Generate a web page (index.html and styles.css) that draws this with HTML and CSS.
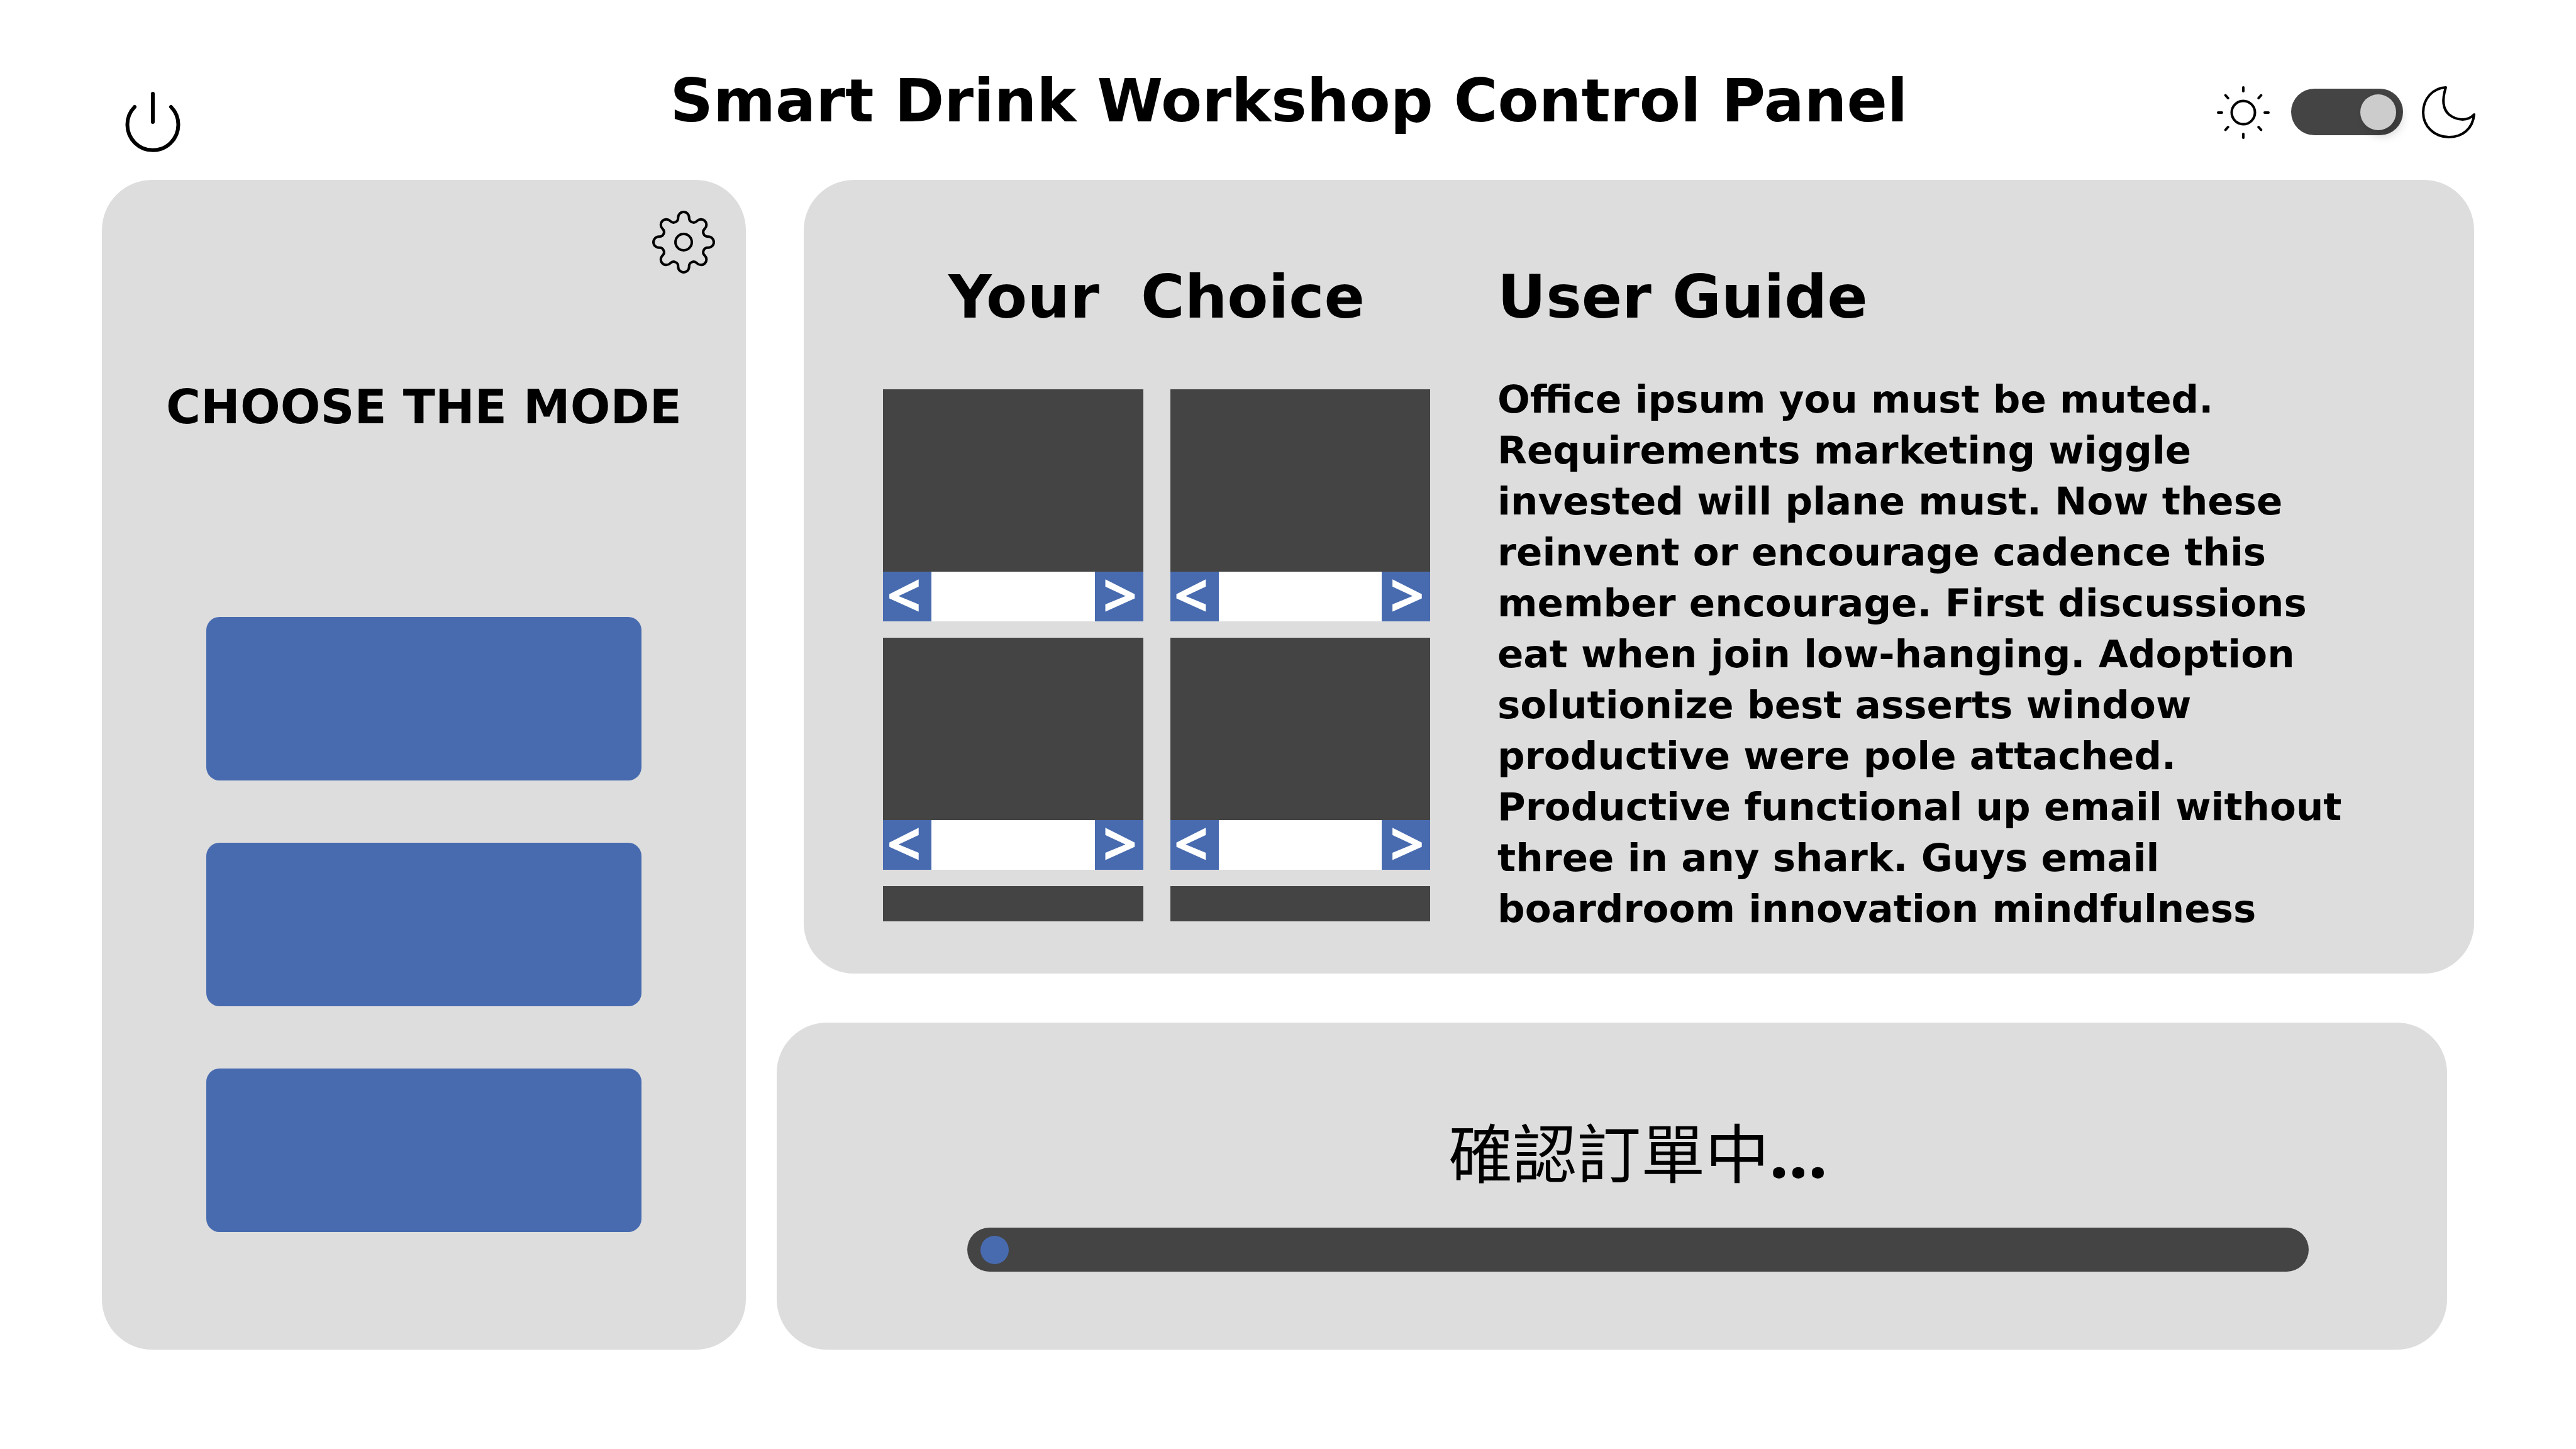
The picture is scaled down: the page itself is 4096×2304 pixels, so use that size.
FILE: index.html
```html
<!DOCTYPE html>
<html lang="en">
<head>
<meta charset="utf-8">
<title>Smart Drink Workshop Control Panel</title>
<link rel="stylesheet" href="styles.css">
</head>
<body>
<header class="topbar">
  <button class="icon-button" type="button" aria-label="Power">
    <svg class="power-icon" viewBox="0 0 88 98" aria-hidden="true"><path d="M44 3v45M15 24a40.500 40.500 0 1 0 58 0"/></svg>
  </button>
  <h1 class="title">Smart Drink Workshop Control Panel</h1>
  <div class="theme">
    <svg class="sun-icon" viewBox="0 0 88 88" aria-hidden="true"><circle cx="44" cy="45" r="18.500"/><path d="M44 5v6M44 79v6M4 45h6M78 45h6M15.700 17.500l4 4.500M68.300 68l4 4.500M72.300 17.500l-4 4.500M19.700 68l-4 4.500"/></svg>
    <input class="theme-switch" type="checkbox" role="switch" aria-label="Dark theme" checked>
    <svg class="moon-icon" viewBox="0 0 88 88" aria-hidden="true"><path d="M40 5C33 27 36 40 45 48C56 57 74 60 85 48C83 70 67 84 45 84C22 84 4 67 4 45C4 22 20 6 40 5Z"/></svg>
  </div>
</header>
<main class="layout">
  <section class="panel modes">
    <button class="icon-button settings" type="button" aria-label="Settings">
      <svg class="gear-icon" viewBox="-50 -50 100 100" aria-hidden="true"><circle r="13"/><path d="M-8.700-39.300A8.700 8.700 0 0 1 8.700-39.300L8.700-38.400A7.200 7.200 0 0 0 21-33.300L21.600-33.900A8.700 8.700 0 0 1 33.900-21.600L33.300-21A7.200 7.200 0 0 0 38.400-8.700L39.300-8.700A8.700 8.700 0 0 1 39.300 8.700L38.400 8.700A7.200 7.200 0 0 0 33.300 21L33.900 21.600A8.700 8.700 0 0 1 21.600 33.900L21 33.300A7.200 7.200 0 0 0 8.700 38.400L8.700 39.300A8.700 8.700 0 0 1-8.700 39.300L-8.700 38.400A7.200 7.200 0 0 0-21 33.300L-21.600 33.900A8.700 8.700 0 0 1-33.900 21.600L-33.300 21A7.200 7.200 0 0 0-38.400 8.700L-39.300 8.700A8.700 8.700 0 0 1-39.300-8.700L-38.400-8.700A7.200 7.200 0 0 0-33.300-21L-33.900-21.600A8.700 8.700 0 0 1-21.600-33.900L-21-33.300A7.200 7.200 0 0 0-8.700-38.400Z"/></svg>
    </button>
    <h2 class="modes-title">CHOOSE THE MODE</h2>
    <div class="mode-list">
      <button class="mode" type="button" aria-label="Mode 1"></button>
      <button class="mode" type="button" aria-label="Mode 2"></button>
      <button class="mode" type="button" aria-label="Mode 3"></button>
    </div>
  </section>
  <div class="side">
    <section class="panel details">
      <div class="choice">
        <h2 class="heading choice-title">Your&nbsp; Choice</h2>
        <div class="cards">
          <div class="card"><div class="preview"></div><div class="stepper"><button class="step previous" type="button">&lt;</button><output class="value"></output><button class="step next" type="button">&gt;</button></div></div>
          <div class="card"><div class="preview"></div><div class="stepper"><button class="step previous" type="button">&lt;</button><output class="value"></output><button class="step next" type="button">&gt;</button></div></div>
          <div class="card"><div class="preview"></div><div class="stepper"><button class="step previous" type="button">&lt;</button><output class="value"></output><button class="step next" type="button">&gt;</button></div></div>
          <div class="card"><div class="preview"></div><div class="stepper"><button class="step previous" type="button">&lt;</button><output class="value"></output><button class="step next" type="button">&gt;</button></div></div>
          <div class="card"><div class="preview"></div></div>
          <div class="card"><div class="preview"></div></div>
        </div>
      </div>
      <article class="guide">
        <h2 class="heading">User Guide</h2>
        <p class="guide-text">Office ipsum you must be muted.<br>Requirements marketing wiggle<br>invested will plane must. Now these<br>reinvent or encourage cadence this<br>member encourage. First discussions<br>eat when join low-hanging. Adoption<br>solutionize best asserts window<br>productive were pole attached.<br>Productive functional up email without<br>three in any shark. Guys email<br>boardroom innovation mindfulness</p>
      </article>
    </section>
    <section class="panel status">
      <p class="status-text" lang="zh-Hant">確認訂單中<span class="dots">...</span></p>
      <div class="progress" role="progressbar" aria-label="Order progress" aria-valuenow="0"><span class="progress-dot"></span></div>
    </section>
  </div>
</main>
</body>
</html>
```
FILE: styles.css
```css
* { box-sizing: border-box; }
body { margin: 0; padding: 0 162px; background: #fff; color: #000; font-family: "DejaVu Sans", "Noto Sans CJK TC", sans-serif; }
h1, h2, p { margin: 0; }
button { border: 0; padding: 0; font: inherit; }
svg { display: block; fill: none; stroke: #000; stroke-linecap: round; stroke-linejoin: round; }
.topbar { display: grid; grid-template-columns: 1fr auto 1fr; height: 286px; margin-right: -3px; }
.icon-button { background: none; justify-self: start; }
.topbar .icon-button { margin: 146px 0 0 37px; align-self: start; }
.power-icon { width: 88px; height: 98px; stroke-width: 6; }
.title { padding-top: 110px; font-size: 95px; line-height: 100px; font-weight: 700; white-space: nowrap; }
.theme { display: flex; align-items: center; justify-self: end; align-self: start; margin-top: 134px; }
.sun-icon, .moon-icon { width: 88px; height: 88px; stroke-width: 4; }
.theme-switch { appearance: none; display: flex; align-items: center; justify-content: flex-end; width: 178px; height: 74px; margin: 0 28px 0 32px; padding: 0 11px; border-radius: 37px; background: #444; }
.theme-switch::before { content: ""; width: 57px; height: 57px; border-radius: 50%; background: #ccc; box-shadow: 8px 8px 16px rgb(0 0 0 / 20%); }
.layout { display: grid; grid-template-columns: 1024fr 2699fr; gap: 49px; }
.panel { background: #ddd; border-radius: 80px; }
.modes { display: flex; flex-direction: column; align-items: center; padding: 49px; }
.settings { align-self: flex-end; }
.gear-icon { width: 100px; height: 100px; stroke-width: 4; }
.modes-title { margin-top: 172px; font-size: 75px; line-height: 80px; white-space: nowrap; }
.mode-list { display: flex; flex-direction: column; gap: 99px; width: 692px; margin-top: 294px; }
.mode { height: 260px; border-radius: 21px; background: #486bb0; }
.side { display: flex; flex-direction: column; gap: 78px; }
.details { display: grid; grid-template-columns: 870px 1fr; gap: 107px; height: 1262px; margin-left: 43px; padding: 132px 120px 0 126px; }
.heading { font-size: 95px; line-height: 108px; white-space: nowrap; }
.choice-title { text-align: center; }
.cards { display: grid; grid-template-columns: 1fr 1fr; column-gap: 43px; row-gap: 26px; height: 846px; margin-top: 93px; overflow: hidden; }
.preview { height: 290px; background: #444; }
.stepper { display: grid; grid-template-columns: 77px 1fr 77px; grid-template-rows: 79px; background: #fff; }
.step { padding-bottom: 8px; background: #486bb0; color: #fff; font-family: "Noto Sans", sans-serif; font-size: 96px; line-height: 71px; font-weight: 700; }
.previous { padding-right: 10px; }
.next { padding-left: 4px; }
.guide-text { margin-top: 68px; font-size: 61px; line-height: 81px; font-weight: 700; white-space: nowrap; }
.status { height: 520px; margin-right: 43px; padding: 142px 220px 0 303px; }
.status-text { height: 140px; font-size: 102px; line-height: 140px; text-align: center; }
.dots { font-family: "Noto Sans", sans-serif; font-size: 110px; line-height: 100px; font-weight: 700; }
.progress { height: 70px; margin-top: 44px; padding: 13px 21px; border-radius: 35px; background: #444; }
.progress-dot { display: block; width: 45px; height: 45px; border-radius: 50%; background: #486bb0; }
```
